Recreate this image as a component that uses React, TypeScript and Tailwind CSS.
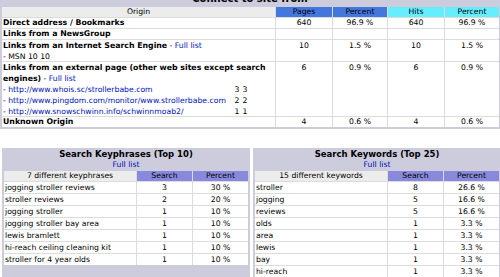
import React from 'react';

const linkCls = 'text-[#0011bb]';
const boldCls = 'font-bold text-[7.8px]';

interface ExtLink {
  url: string;
  pages: number;
  hits: number;
}

const extLinks: ExtLink[] = [
  { url: 'http://www.whois.sc/strollerbabe.com', pages: 3, hits: 3 },
  { url: 'http://www.pingdom.com/monitor/www.strollerbabe.com', pages: 2, hits: 2 },
  { url: 'http://www.snowschwinn.info/schwinnmoab2/', pages: 1, hits: 1 },
];

const keyphrases: [string, number, string][] = [
  ['jogging stroller reviews', 3, '30 %'],
  ['stroller reviews', 2, '20 %'],
  ['jogging stroller', 1, '10 %'],
  ['jogging stroller bay area', 1, '10 %'],
  ['lewis bramlett', 1, '10 %'],
  ['hi-reach ceiling cleaning kit', 1, '10 %'],
  ['stroller for 4 year olds', 1, '10 %'],
];

const keywords: [string, number, string][] = [
  ['stroller', 8, '26.6 %'],
  ['jogging', 5, '16.6 %'],
  ['reviews', 5, '16.6 %'],
  ['olds', 1, '3.3 %'],
  ['area', 1, '3.3 %'],
  ['lewis', 1, '3.3 %'],
  ['bay', 1, '3.3 %'],
  ['hi-reach', 1, '3.3 %'],
  ['ceiling', 1, '3.3 %'],
  ['cleaning', 1, '3.3 %'],
];

const Cell: React.FC<{ children?: React.ReactNode; className?: string }> = ({ children, className = '' }) => (
  <div className={`bg-white text-center leading-[10px] ${className}`}>{children}</div>
);

const SearchBox: React.FC<{ title: string; label: string; rows: [string, number, string][] }> = ({ title, label, rows }) => (
  <div className="w-[248px] shrink-0 bg-[#ccccdd] p-[2px] pt-[1px]">
    <div className="text-center">
      <div className="text-[8.5px] font-bold leading-[11px]">{title}</div>
      <div className={`leading-[10px] ${linkCls}`}>Full list</div>
    </div>
    <div className="mt-[1px] grid grid-cols-[132px_55px_55px] gap-px bg-[#dcdcdc]">
      <div className="bg-[#ececec] text-center leading-[10px]">{label}</div>
      <div className="bg-[#8888dd] text-center leading-[10px]">Search</div>
      <div className="bg-[#8888dd] text-center leading-[10px]">Percent</div>
      {rows.map(([k, n, p]) => (
        <React.Fragment key={k}>
          <div className="whitespace-nowrap bg-white pl-px leading-[11px]">{k}</div>
          <div className="bg-white text-center leading-[11px]">{n}</div>
          <div className="bg-white text-center leading-[11px]">{p}</div>
        </React.Fragment>
      ))}
    </div>
  </div>
);

export default function App() {
  return (
    <div className="h-[277px] w-[500px] overflow-hidden bg-white font-['DejaVu_Sans',Verdana,sans-serif] text-[7.7px] text-black">
      {/* Connect to site from */}
      <div className="-mt-[9px] bg-[#ccccdd] px-[2px] pb-[2px]">
        <div className="text-center text-[10px] font-bold leading-[16px]">Connect to site from</div>
        <div className="grid grid-cols-[273px_56px_54px_56px_54px] gap-px bg-[#dcdcdc]">
          <Cell className="bg-[#ececec]!">Origin</Cell>
          <Cell className="bg-[#4477dd]!">Pages</Cell>
          <Cell className="bg-[#4477dd]!">Percent</Cell>
          <Cell className="bg-[#66eeff]!">Hits</Cell>
          <Cell className="bg-[#66eeff]!">Percent</Cell>

          <div className={`bg-white pl-px leading-[10px] ${boldCls}`}>Direct address / Bookmarks</div>
          <Cell>640</Cell>
          <Cell>96.9 %</Cell>
          <Cell>640</Cell>
          <Cell>96.9 %</Cell>

          <div className={`bg-white pl-px leading-[10px] ${boldCls}`}>Links from a NewsGroup</div>
          <Cell />
          <Cell />
          <Cell />
          <Cell />

          <div className="h-[21px] bg-white pl-px leading-[11px]">
            <span className={boldCls}>Links from an Internet Search Engine</span> - <span className={linkCls}>Full list</span>
            <div>- MSN 10 10</div>
          </div>
          <Cell className="leading-[11px]!">10</Cell>
          <Cell className="leading-[11px]!">1.5 %</Cell>
          <Cell className="leading-[11px]!">10</Cell>
          <Cell className="leading-[11px]!">1.5 %</Cell>

          <div className="h-[54px] bg-white pl-px leading-[11px]">
            <span className={boldCls}>Links from an external page (other web sites except search engines)</span> - <span className={linkCls}>Full list</span>
            {extLinks.map((l) => (
              <div key={l.url} className="flex">
                <div className="w-[230px] whitespace-nowrap">
                  - <span className={linkCls}>{l.url}</span>
                </div>
                <div className="w-[8px] text-center">{l.pages}</div>
                <div className="w-[8px] text-center">{l.hits}</div>
              </div>
            ))}
          </div>
          <Cell className="leading-[11px]!">6</Cell>
          <Cell className="leading-[11px]!">0.9 %</Cell>
          <Cell className="leading-[11px]!">6</Cell>
          <Cell className="leading-[11px]!">0.9 %</Cell>

          <div className={`bg-white pl-px leading-[10px] ${boldCls}`}>Unknown Origin</div>
          <Cell>4</Cell>
          <Cell>0.6 %</Cell>
          <Cell>4</Cell>
          <Cell>0.6 %</Cell>
        </div>
      </div>

      <div className="mt-[19px] flex gap-[3px] pl-[2px]">
        <SearchBox title="Search Keyphrases (Top 10)" label="7 different keyphrases" rows={keyphrases} />
        <SearchBox title="Search Keywords (Top 25)" label="15 different keywords" rows={keywords} />
      </div>
    </div>
  );
}
